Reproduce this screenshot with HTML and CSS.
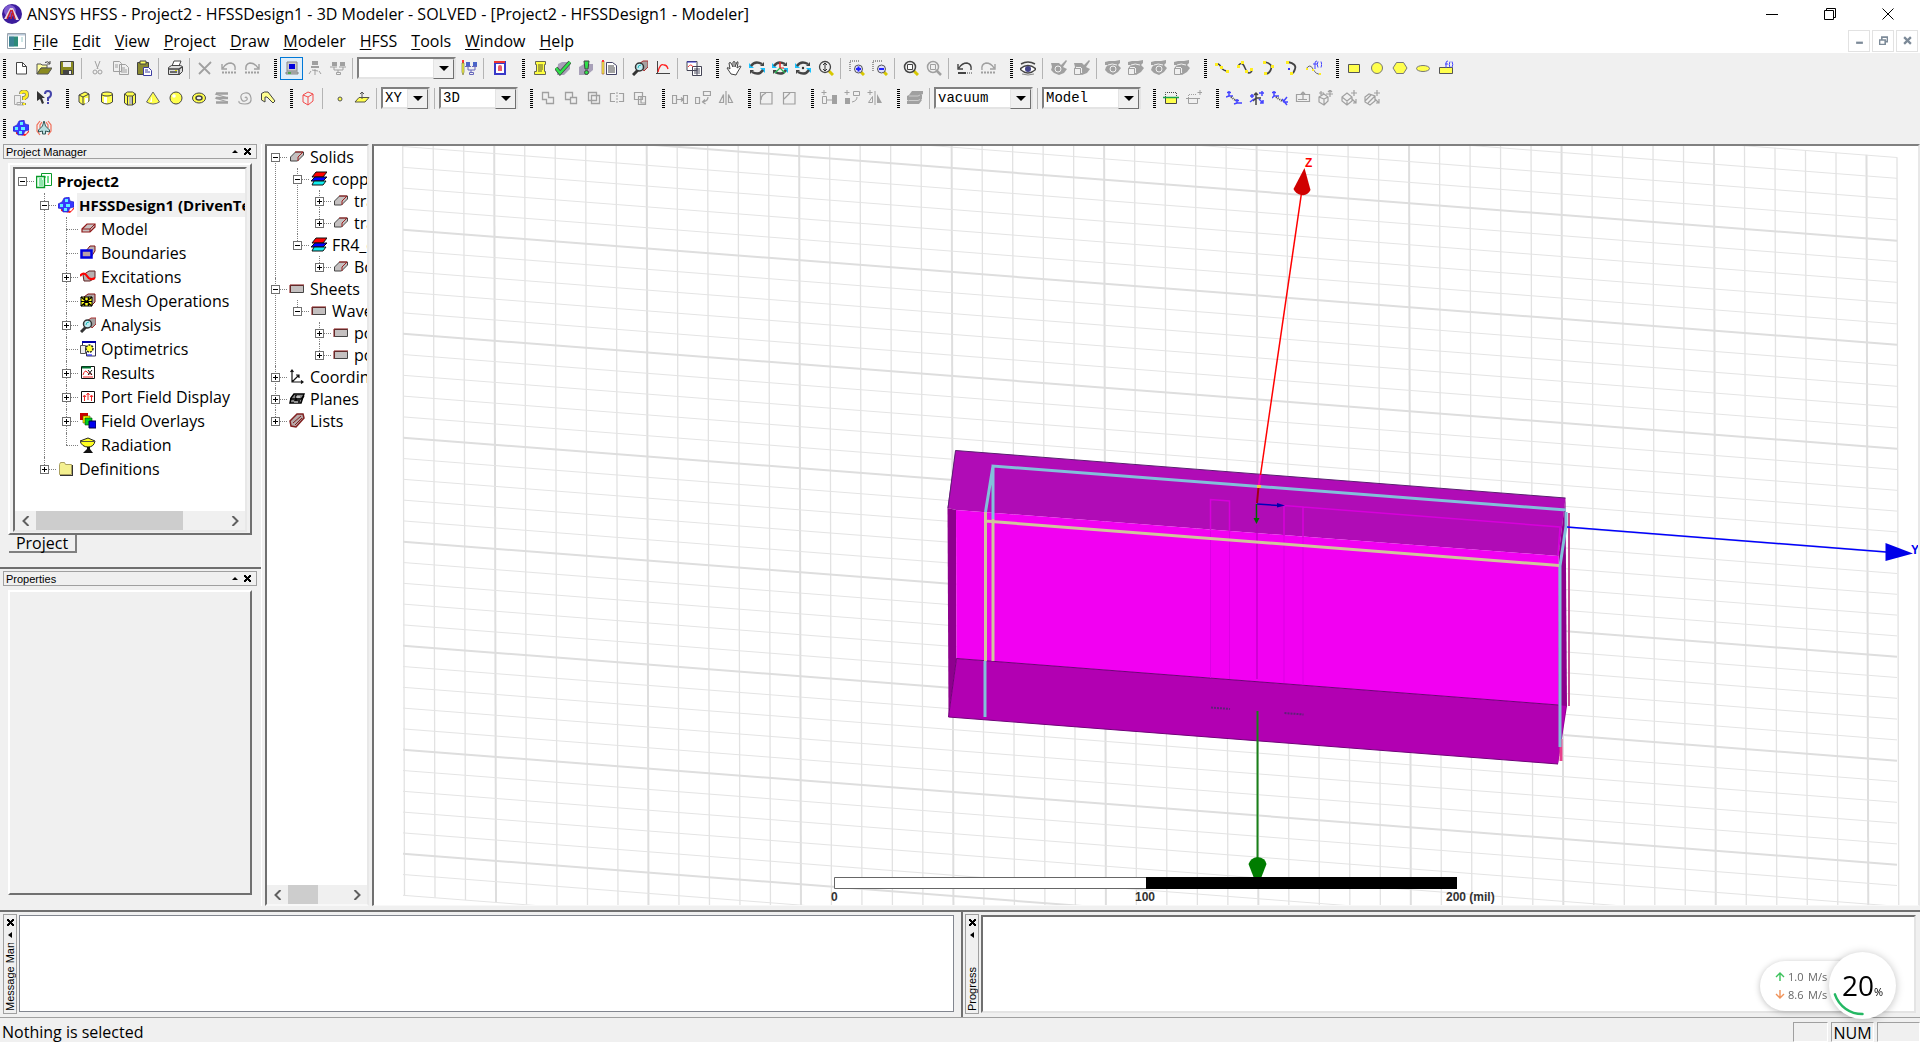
FILE: index.html
```html
<!DOCTYPE html>
<html lang="en">
<head>
<meta charset="utf-8">
<title>ANSYS HFSS - Project2 - HFSSDesign1 - 3D Modeler</title>
<link rel="stylesheet" href="styles.css">
</head>
<body>
<svg class="sprite" aria-hidden="true">
  <defs>
    <!-- file and edit -->
    <symbol id="i-new" viewBox="0 0 16 16"><path d="M3.500 2.500h6l4 4v7.500h-10z" fill="#fff" stroke="#444"/><path d="M9.500 2.500v4h4" fill="none" stroke="#444"/></symbol>
    <symbol id="i-open" viewBox="0 0 16 16"><path d="M1 4h4l1 1h5v3H5l-4 6z" fill="#ffffa0" stroke="#555"/><path d="M1 14l4-6h11l-4 6z" fill="#8a8a20" stroke="#555"/><path d="M9 2.500q3-2 5 1M14 1v3h-3" fill="none" stroke="#444"/></symbol>
    <symbol id="i-save" viewBox="0 0 16 16"><path d="M1.500 1.500h13v13h-13z" fill="#8a8a20" stroke="#444"/><path d="M4 2h8v5H4z" fill="#eee"/><path d="M4 10h9v4H4z" fill="#444"/><path d="M10 11h2v3h-2z" fill="#eee"/></symbol>
    <symbol id="i-cut" viewBox="0 0 16 16"><g fill="none" stroke="#a0a0a0"><path d="M5 1l3 8M10 1L7 9"/><circle cx="5" cy="12" r="2"/><circle cx="10" cy="12" r="2"/></g></symbol>
    <symbol id="i-copy" viewBox="0 0 16 16"><g fill="#f0f0f0" stroke="#a0a0a0"><path d="M.5 1.500h6l2 2v8h-8zM6.500 4.500h6l3 3v7h-9z"/><path d="M2 5h3M2 7h3M8 8h4M8 10h6M8 12h6"/></g></symbol>
    <symbol id="i-paste" viewBox="0 0 16 16"><path d="M1.500 2.500h11v12h-11z" fill="#8a8a30" stroke="#444"/><path d="M4 1h6v3H4z" fill="#ffff60" stroke="#444"/><path d="M7.500 7.500h5l3 3v5h-8z" fill="#fff" stroke="#3c3ca0"/><path d="M9 10h3M9 12h5" stroke="#3c3ca0"/></symbol>
    <symbol id="i-print" viewBox="0 0 16 16"><path d="M5 6l2-5h7l-2 5" fill="#fff" stroke="#444"/><path d="M1.500 7.500l3-2h9l2 1v5l-3 3h-11z" fill="#ddd" stroke="#444"/><path d="M1 9h11l3-2M12 9v6M3 12h7" fill="none" stroke="#444" stroke-width="1.500"/><path d="M8 10h2v1H8z" fill="#dd0"/></symbol>
    <symbol id="i-del" viewBox="0 0 16 16"><path d="M1 3l11 11M13 2L1 14" stroke="#a0a0a0" stroke-width="1.800"/></symbol>
    <symbol id="i-undo" viewBox="0 0 16 16"><path d="M2 8q3-5 8-5 5 1 4 7M1 4v5h5" fill="none" stroke="#a0a0a0" stroke-width="1.400"/><path d="M1 12.500h8M10 12.500h5" stroke="#a0a0a0" stroke-width="2" stroke-dasharray="2 1"/></symbol>
    <symbol id="i-redo" viewBox="0 0 16 16"><path d="M14 8q-3-5-8-5-5 1-4 7M15 4v5h-5" fill="none" stroke="#a0a0a0" stroke-width="1.400"/><path d="M15 12.500H7M6 12.500H1" stroke="#a0a0a0" stroke-width="2" stroke-dasharray="2 1"/></symbol>
    <symbol id="i-undod" viewBox="0 0 16 16"><path d="M2 8q3-5 8-5 5 1 4 7M1 4v5h5" fill="none" stroke="#444" stroke-width="1.400"/><path d="M1 13h8" stroke="#444" stroke-width="2"/><path d="M10 13h5" stroke="#444" stroke-dasharray="1 1"/></symbol>
    <!-- machines -->
    <symbol id="i-pc" viewBox="0 0 16 16"><path d="M3 2h10v9H3z" fill="#ccc" stroke="#888"/><path d="M5 4h6v5H5z" fill="#00d"/><path d="M2 12h12v2H2z" fill="#bbb" stroke="#888"/><path d="M4 13h3" stroke="#0a0"/></symbol>
    <symbol id="i-pc2" viewBox="0 0 16 16"><path d="M5 1h6v4H5zM4 6h8v2H4z" fill="#a0a0a0"/><path d="M8 9v2M4 11l-2 3M8 11v4M12 11l2 3M5 10l6 1" stroke="#a0a0a0"/></symbol>
    <symbol id="i-pc3" viewBox="0 0 16 16"><path d="M2 2h5v4H2zM10 2h5v4h-5z" fill="#a0a0a0"/><path d="M0 7h7M9 7h7M4 7v3h9V7M8 10v2" fill="none" stroke="#a0a0a0"/><path d="M6.500 12.500h4v2h-4z" fill="none" stroke="#a0a0a0"/></symbol>
    <symbol id="i-pc4" viewBox="0 0 16 16"><path d="M1 0h2v3H1z" fill="#f33"/><path d="M1 3h2v9l-1 3-1-3z" fill="#ff4" stroke="#663" stroke-width=".6"/><path d="M5 2h4v4H5zM12 2h4v4h-4z" fill="#4a64c8"/><path d="M7 7v3h7V7M10 10v2M4 6.500h6M11 6.500h5" fill="none" stroke="#66b"/><path d="M8.500 12.500h4v2h-4z" fill="none" stroke="#66b"/></symbol>
    <symbol id="i-log" viewBox="0 0 16 16"><path d="M2 1h12v14H2z" fill="#3838c8"/><path d="M2 1h11v2H2z" fill="#e33"/><path d="M4 4h8v9H4z" fill="#fff"/><path d="M6 7q0-2 2-2t2 2v4H6z" fill="#eb5a6a"/></symbol>
    <!-- validation and analysis -->
    <symbol id="i-scroll" viewBox="0 0 16 16"><path d="M3.500 1.500h10v3h-1v7h1v3h-11v-3h2v-7h-1z" fill="#ffff40" stroke="#665"/><path d="M6 5h5M6 7h5M6 9h5M6 11h4" stroke="#553"/></symbol>
    <symbol id="i-check" viewBox="0 0 16 16"><path d="M3 4l4-2h8v7l-6 6H2z" fill="#a8a0b8"/><path d="M1 8l4 5L15 2" fill="none" stroke="#444" stroke-width="4"/><path d="M1 8l4 5L15 2" fill="none" stroke="#2fe04a" stroke-width="2.500"/></symbol>
    <symbol id="i-bang" viewBox="0 0 16 16"><path d="M1 7l5-3h9v6l-6 5H1z" fill="#a8a0b8"/><path d="M6 1h5l-1 8H7z" fill="#2fe04a" stroke="#444"/><circle cx="8.500" cy="12.500" r="2" fill="#2fe04a" stroke="#444"/></symbol>
    <symbol id="i-doc" viewBox="0 0 16 16"><path d="M1 1h2v13H1z" fill="#ff4" stroke="#a64" stroke-width=".7"/><path d="M1 0h2v2H1z" fill="#f33"/><path d="M5.500 2.500h6l4 3v9h-10z" fill="#fff" stroke="#446"/><path d="M7 6h6M7 8h7M7 10h7M7 12h7" stroke="#444"/></symbol>
    <symbol id="i-mag" viewBox="0 0 16 16"><path d="M7 4l4-3h5v6l-4 4z" fill="#a6a0a0" stroke="#a33"/><path d="M6 10l-5 5" stroke="#333" stroke-width="3"/><circle cx="7.500" cy="7" r="4" fill="#bfeaf0" stroke="#333" stroke-width="1.500"/><path d="M6 8q0-3 3-3" fill="none" stroke="#2bb"/></symbol>
    <symbol id="i-chart" viewBox="0 0 16 16"><path d="M2.500 1v13M1 13.500h14" stroke="#444"/><path d="M3 12q2-9 6-7 3 0 4 4" fill="none" stroke="#f22" stroke-width="1.300"/></symbol>
    <symbol id="i-rep" viewBox="0 0 16 16"><path d="M1 1.500h10v9H1zM6.500 6.500h9v9h-9z" fill="#fff" stroke="#445"/><path d="M1 2h9" stroke="#33c" stroke-width="1"/><path d="M2 7q3-4 5 0" stroke="#e33" fill="none"/><path d="M8 9h6M8 11h6M8 13h6M11 8v7" stroke="#556"/></symbol>
    <!-- view control -->
    <symbol id="i-hand" viewBox="0 0 16 16"><path d="M5 14L1 8q0-1.500 3 1L3 3q1-1 2 0l2 4V2q1-1 2 0v5l2-5q1-1 1 1l-1 5 3-2q2 0 0 2l-3 5-1 2z" fill="#fff" stroke="#444"/></symbol>
    <symbol id="i-rot" viewBox="0 0 16 16"><path d="M0 3v5h5zM16 13V8h-5z" fill="#19c3ff"/><path d="M2 6q4-6 11-2M14 10q-4 6-11 2" fill="none" stroke="#444" stroke-width="2.400"/><path d="M11 6h4V2zM5 10H1v4z" fill="#444"/></symbol>
    <symbol id="i-rota" viewBox="0 0 16 16"><use href="#i-rot"/><path d="M8 2v7" stroke="#e22" stroke-width="1.500"/><path d="M8 8l5 5M8 8l-5 5" stroke="#2b5" stroke-width="1.200"/><path d="M8 8h4" stroke="#e22"/></symbol>
    <symbol id="i-rotb" viewBox="0 0 16 16"><use href="#i-rot"/><circle cx="8" cy="8" r="1.200" fill="#333"/></symbol>
    <symbol id="i-zoomv" viewBox="0 0 16 16"><path d="M10 10l5 5" stroke="#d8c800" stroke-width="3"/><circle cx="7" cy="7" r="5.500" fill="#eee" stroke="#444" stroke-width="1.300"/><path d="M7 3v8M5 5l2-2 2 2M5 9l2 2 2-2" fill="none" stroke="#333"/></symbol>
    <symbol id="i-zin" viewBox="0 0 16 16"><path d="M1 11V1h10" fill="none" stroke="#444" stroke-dasharray="1 1"/><path d="M12 12l3 3" stroke="#d8c800" stroke-width="3"/><circle cx="9.500" cy="9" r="4" fill="#ddf" stroke="#555"/><path d="M9.500 6.500v5M7 9h5" stroke="#22f" stroke-width="2"/></symbol>
    <symbol id="i-zout" viewBox="0 0 16 16"><path d="M1 11V1h10" fill="none" stroke="#444" stroke-dasharray="1 1"/><path d="M12 12l3 3" stroke="#d8c800" stroke-width="3"/><circle cx="9.500" cy="9" r="4" fill="#ddf" stroke="#555"/><path d="M7 9h5" stroke="#22f" stroke-width="2"/></symbol>
    <symbol id="i-fit" viewBox="0 0 16 16"><path d="M10 10l5 5" stroke="#d8c800" stroke-width="3"/><circle cx="7" cy="7" r="5.500" fill="#eee" stroke="#444" stroke-width="1.500"/><path d="M4.500 4.500h5v5h-5z" fill="#fff" stroke="#444"/></symbol>
    <symbol id="i-fitg" viewBox="0 0 16 16"><path d="M10 10l5 5" stroke="#a0a0a0" stroke-width="2.500"/><circle cx="7" cy="7" r="5.500" fill="none" stroke="#a0a0a0" stroke-width="1.500"/><path d="M4.500 4.500h5v5h-5z" fill="none" stroke="#a0a0a0"/></symbol>
    <symbol id="i-eye" viewBox="0 0 16 16"><path d="M1 4q7-4 14 0" fill="none" stroke="#444" stroke-width="1.500"/><path d="M0 9q8-7 16 0-8 8-16 0z" fill="#fff" stroke="#444" stroke-width="1.600"/><circle cx="8" cy="9" r="3" fill="#448"/><path d="M2 14q6 2 12 0" stroke="#888" fill="none"/></symbol>
    <symbol id="i-eyeg" viewBox="0 0 16 16"><path d="M0 2l4-1h6l5-1v3l-2 2 3 3-3 4-5 3-5-2-3-3 1-3 2-2H0z" fill="#a0a0a0"/><circle cx="8" cy="9" r="3" fill="none" stroke="#f0f0f0"/><path d="M3 5q4-2 9 0" fill="none" stroke="#f0f0f0"/></symbol>
    <symbol id="i-eyeh" viewBox="0 0 16 16"><path d="M0 2l4-1h6l5-1v3l-2 2 3 3-3 4-5 3-5-2-3-3 1-3 2-2H0z" fill="#a0a0a0"/><path d="M3 5q4-2 9 0" fill="none" stroke="#f0f0f0"/><path d="M.5 8.500l2-2h6v6l-2 2h-6zM.5 8.500h6v6M6.500 8.500l2-2" fill="#f0f0f0" stroke="#a0a0a0"/></symbol>
    <symbol id="i-eyet" viewBox="0 0 16 16"><path d="M0 3h8l2 2 5-5 1 1-4 6 4 2-3 4-5 2-5-2-3-3 1-3z" fill="#a0a0a0"/><circle cx="7" cy="9" r="3" fill="none" stroke="#f0f0f0"/></symbol>
    <symbol id="i-eyeu" viewBox="0 0 16 16"><path d="M0 3h8l2 2 5-5 1 1-4 6 4 2-3 4-5 2-5-2-3-3 1-3z" fill="#a0a0a0"/><path d="M.5 8.500l2-2h6v6l-2 2h-6zM.5 8.500h6v6M6.500 8.500l2-2" fill="#f0f0f0" stroke="#a0a0a0"/></symbol>
    <!-- curves and sheets -->
    <symbol id="i-line" viewBox="0 0 16 16"><path d="M2 4q3-1 5 3t7 4" fill="none" stroke="#444" stroke-width="1.500"/><path d="M1 3h3v3H1zM6 6h3v3H6zM12 10h3v3h-3z" fill="#ffee20"/></symbol>
    <symbol id="i-spline" viewBox="0 0 16 16"><path d="M1 6q4-6 7 2t7 3" fill="none" stroke="#444" stroke-width="1.500"/><path d="M0 5h3v3H0zM4 1h3v3H4zM8 10h3v3H8zM13 8h3v3h-3z" fill="#ffee20"/></symbol>
    <symbol id="i-arc" viewBox="0 0 16 16"><path d="M5 2q8 2 6 7-1 4-5 5" fill="none" stroke="#444" stroke-width="1.800"/><path d="M3 1h3v3H3zM11 5h3v3h-3zM4 12h3v3H4z" fill="#ffee20"/></symbol>
    <symbol id="i-arc2" viewBox="0 0 16 16"><path d="M5 2q9 2 7 7-1 4-4 5" fill="none" stroke="#444" stroke-width="1.800"/><path d="M3 1h3v3H3zM7 12h3v3H7z" fill="#ffee20"/><path d="M5 8h2v2H5z" fill="#33f"/></symbol>
    <symbol id="i-fx" viewBox="0 0 16 16"><path d="M0 9q4-6 7 0t8 5" fill="none" stroke="#666"/><path d="M0 8h2v2H0zM6 9h2v2H6zM13 13h2v2h-2z" fill="#ffee20"/><path d="M9 9V3q0-2 2-2M7 4h4M12 1.500q-1.500 3 0 6M15 1.500q1.500 3 0 6" fill="none" stroke="#44f"/></symbol>
    <symbol id="i-rect" viewBox="0 0 16 16"><path d="M2.500 4.500h11v8h-11z" fill="#ffff4d" stroke="#555"/></symbol>
    <symbol id="i-circle" viewBox="0 0 16 16"><circle cx="8" cy="8" r="5.500" fill="#ffff4d" stroke="#777"/></symbol>
    <symbol id="i-hex" viewBox="0 0 16 16"><path d="M4.500 2.500h7l3.500 5.500-3.500 5.500h-7L1 8z" fill="#ffff4d" stroke="#777"/></symbol>
    <symbol id="i-ellipse" viewBox="0 0 16 16"><ellipse cx="8" cy="8.500" rx="6.500" ry="3" fill="#ffff4d" stroke="#777"/></symbol>
    <symbol id="i-rectfx" viewBox="0 0 16 16"><path d="M1.500 7.500h13v6h-13z" fill="#ffff4d" stroke="#555"/><path d="M8 8V3q0-2 2-2M7 4h3M12 1.500q-1.500 3 0 6M14 1.500q1.500 3 0 6" fill="none" stroke="#44f"/></symbol>
    <!-- help and primitives -->
    <symbol id="i-helpdoc" viewBox="0 0 16 16"><path d="M1.500 5.500h6v9h-6zM4 12.500h7v2.500H4z" fill="#eee" stroke="#aaa"/><path d="M8 4q0-2.500 3-2.500t3 3-3 3.500v2M11 13v2" fill="none" stroke="#776" stroke-width="4"/><path d="M8 4q0-2.500 3-2.500t3 3-3 3.500v2M11 13v2" fill="none" stroke="#ffee20" stroke-width="2.500"/></symbol>
    <symbol id="i-helparr" viewBox="0 0 16 16"><path d="M1 1l8 7H6l2 5-2 1-2-5-3 2z" fill="#333"/><path d="M9 4q0-3 3-3t3 3-3 4v3M12 12v2" fill="none" stroke="#44a" stroke-width="2"/></symbol>
    <symbol id="i-box" viewBox="0 0 16 16"><path d="M3 5l6-3 4 2v7l-6 4-4-3z" fill="#ffff4d" stroke="#444"/><path d="M3 5l4 2 6-3M7 7v8" fill="none" stroke="#444"/><path d="M9 8h3v4L9 14z" fill="#fff"/></symbol>
    <symbol id="i-cyl" viewBox="0 0 16 16"><path d="M2.500 4v8q5.500 4 11 0V4" fill="#ffff4d" stroke="#444"/><ellipse cx="8" cy="4" rx="5.500" ry="2" fill="#ffff4d" stroke="#444"/><path d="M5 7h3v6H5z" fill="#fff"/></symbol>
    <symbol id="i-prism" viewBox="0 0 16 16"><path d="M2.500 4l3-2h5l3 2v9l-3 2h-5l-3-2z" fill="#ffff4d" stroke="#444"/><path d="M2.500 4l3 2h5l3-2M5.500 6v9M10.500 6v9" fill="none" stroke="#444"/><path d="M7 7h3v7H7z" fill="#bbb"/></symbol>
    <symbol id="i-cone" viewBox="0 0 16 16"><path d="M8 2L1.500 12q6.500 4 13 0z" fill="#ffff4d" stroke="#666"/><path d="M7 6l-2 6h2z" fill="#fff"/></symbol>
    <symbol id="i-sphere" viewBox="0 0 16 16"><circle cx="8" cy="8" r="6" fill="#ffff4d" stroke="#444"/><circle cx="6" cy="6" r="1.800" fill="#fff"/></symbol>
    <symbol id="i-torus" viewBox="0 0 16 16"><ellipse cx="8" cy="8" rx="6.500" ry="5" fill="#ffff4d" stroke="#444"/><ellipse cx="8" cy="8" rx="3" ry="2" fill="#f0f0f0" stroke="#444" stroke-width="1.500"/></symbol>
    <symbol id="i-helix" viewBox="0 0 16 16"><path d="M2 3.500h12M2 8h12M2 12.500h12" stroke="#a0a0a0" stroke-width="2.500"/><path d="M1 4l13 4M1 8l13 4" stroke="#a0a0a0" stroke-width="1.200"/></symbol>
    <symbol id="i-spiral" viewBox="0 0 16 16"><path d="M8 8q1-2 2 0t-2 3-4-3 4-5 6 5-6 6-6-3" fill="none" stroke="#a0a0a0" stroke-width="1.200"/></symbol>
    <symbol id="i-bond" viewBox="0 0 16 16"><path d="M1.500 10V3.500l3-1.500H8l7 9-2 2-6-6H5v5z" fill="#ffff90" stroke="#444"/></symbol>
    <symbol id="i-redbox" viewBox="0 0 16 16"><path d="M3 5l5-3 5 2v7l-5 4-5-3zM3 5l5 2 5-3M8 7v8" fill="none" stroke="#f34a4a"/></symbol>
    <symbol id="i-point" viewBox="0 0 16 16"><circle cx="9" cy="9" r="2" fill="#ffff4d" stroke="#555"/></symbol>
    <symbol id="i-plane" viewBox="0 0 16 16"><path d="M5 7.500h10l-4 4.500H1z" fill="#ffff4d" stroke="#554"/><path d="M8 9V2M6 4l2-2 2 2" fill="none" stroke="#555"/></symbol>
    <!-- modeller operations -->
    <symbol id="i-unite" viewBox="0 0 16 16"><path d="M2.500 2.500h6v5h5v6h-7v-4h-4z" fill="none" stroke="#a0a0a0" stroke-width="1.300"/></symbol>
    <symbol id="i-sub" viewBox="0 0 16 16"><path d="M8 9.500H2.500v-7h7V7M7.500 7.500h6v6h-6z" fill="none" stroke="#a0a0a0" stroke-width="1.300"/></symbol>
    <symbol id="i-inter" viewBox="0 0 16 16"><path d="M2.500 2.500h8v8h-8zM5.500 5.500h8v8h-8z" fill="none" stroke="#a0a0a0" stroke-width="1.300"/></symbol>
    <symbol id="i-split" viewBox="0 0 16 16"><path d="M6 3.500H1.500v8H6M10 3.500h4.500v8H10" fill="none" stroke="#a0a0a0" stroke-width="1.200"/><path d="M8 2v12" stroke="#a0a0a0" stroke-dasharray="2 1"/></symbol>
    <symbol id="i-impr" viewBox="0 0 16 16"><path d="M2.500 2.500h8v7h-8zM6.500 6.500h7v8h-7zM9 7v6h4" fill="none" stroke="#a0a0a0" stroke-width="1.200"/></symbol>
    <symbol id="i-move" viewBox="0 0 16 16"><path d="M.5 5.500h4v8h-4zM11.500 5.500h4v8h-4zM5 9.500h6M9 7.500l2 2-2 2" fill="none" stroke="#a0a0a0" stroke-width="1.200"/></symbol>
    <symbol id="i-turn" viewBox="0 0 16 16"><path d="M.5 7.500h4v6h-4zM8.500 1.500h7v4h-7zM13 7q0 4-5 5M10 9.500L7.500 12l3 2" fill="none" stroke="#a0a0a0" stroke-width="1.200"/></symbol>
    <symbol id="i-mirror" viewBox="0 0 16 16"><path d="M1.500 12.500l4-8v8zM14.500 12.500l-4-8v8zM8 1v14" fill="none" stroke="#a0a0a0" stroke-width="1.200"/></symbol>
    <symbol id="i-dmove" viewBox="0 0 16 16"><path d="M1.500 6.500h4v7h-4zM6 10h5M3 0v5M.5 2.500h5" fill="none" stroke="#a0a0a0"/><path d="M11 5h5v9h-5z" fill="#a0a0a0"/></symbol>
    <symbol id="i-dturn" viewBox="0 0 16 16"><path d="M1 8h5v6H1z" fill="#a0a0a0"/><path d="M9.500 1.500h6v4h-6zM13 7q0 4-5 5M3 0v5M.5 2.500h5" fill="none" stroke="#a0a0a0"/></symbol>
    <symbol id="i-dmirror" viewBox="0 0 16 16"><path d="M10 13V4l5 9z" fill="#a0a0a0"/><path d="M1.500 12.500l4-6v6zM8 1v14M3 0v5M.5 2.500h5" fill="none" stroke="#a0a0a0"/></symbol>
    <symbol id="i-fillet" viewBox="0 0 16 16"><path d="M2.500 14V2.500H14V14zM3 10q0-5 5-7" fill="none" stroke="#a0a0a0" stroke-width="1.200"/></symbol>
    <symbol id="i-chamf" viewBox="0 0 16 16"><path d="M2.500 14V2.500H14V14zM3 9l6-6" fill="none" stroke="#a0a0a0" stroke-width="1.200"/></symbol>
    <symbol id="i-layers" viewBox="0 0 16 16"><path d="M5 1h11v3l-2 1h1v4l-1 1h1l-3 4H0v-3l2-1H0V6l2-1z" fill="#a0a0a0"/><path d="M2 6h9l2-1M2 10.500h9l2-1" fill="none" stroke="#e0e0e0" stroke-width=".7"/></symbol>
    <symbol id="i-sheetg" viewBox="0 0 16 16"><path d="M2.500 7.500h11v6h-11z" fill="#ffff4d" stroke="#444"/><path d="M2.500 7V2.500h11V7" fill="none" stroke="#444" stroke-dasharray="1 1"/><path d="M0 7.500h16" stroke="#1aa34a" stroke-width="1.500"/></symbol>
    <symbol id="i-sheeta" viewBox="0 0 16 16"><path d="M2.500 8.500h9v5h-9zM14 0v5M11.500 2.500h5M0 8.500h14" fill="none" stroke="#a0a0a0"/><path d="M2.500 8V4.500h8" fill="none" stroke="#a0a0a0" stroke-dasharray="1 1"/></symbol>
    <symbol id="i-cs1" viewBox="0 0 16 16"><path d="M3 1v5h4M3 6L0 7M1 2.500h4M11 9v4h5M11 13l-3 1M9 10.500h4" fill="none" stroke="#44f" stroke-width="1.500"/><path d="M5 7l4 3" stroke="#444" stroke-dasharray="1 1" stroke-width="2"/></symbol>
    <symbol id="i-cs2" viewBox="0 0 16 16"><path d="M7 15V4M7 8h5M7 8l-3 3M5 5l2-2 2 2" fill="none" stroke="#444" stroke-width="1.500"/><path d="M1 6h4M3 4v4M1 12l4-3M10 3h5M13 1v5M10 9l4 4M14 10v3h-3" fill="none" stroke="#44f" stroke-width="1.500"/></symbol>
    <symbol id="i-cs3" viewBox="0 0 16 16"><path d="M2 1v5h5M2 6L0 8M0 2.500h4M11 12l4-5M11 12h5M10 9l5 6" fill="none" stroke="#44f" stroke-width="1.500"/><path d="M4 7l6 4" stroke="#444" stroke-dasharray="1 1" stroke-width="2"/></symbol>
    <symbol id="i-cs4" viewBox="0 0 16 16"><path d="M1.500 4.500h13v7h-13zM3 9.500h9M8 2v8M6 4l2-2 2 2" fill="none" stroke="#a0a0a0" stroke-width="1.200"/></symbol>
    <symbol id="i-cs5" viewBox="0 0 16 16"><path d="M1 7l5-3 4 3v4l-4 4-5-3zM1 7l5 2 4-2M6 9v6M8 4h7M12 0v7M10 2l2-2 2 2M1 3h5M3 1v4" fill="none" stroke="#a0a0a0" stroke-width="1.200"/></symbol>
    <symbol id="i-cs6" viewBox="0 0 16 16"><path d="M1 7l5-4 5 4v4l-5 4-5-4zM1 7l5 4 5-4M6 11v4M10 3h6M13 0v6M11 9l4 4M15 9v4h-3" fill="none" stroke="#a0a0a0" stroke-width="1.200"/></symbol>
    <symbol id="i-cs7" viewBox="0 0 16 16"><path d="M1 7l4-3 6 2v5l-5 4-5-3zM1 11l6-6M4 13l7-7M10 3h6M13 0v6M11 9l4 4M15 9v4h-3" fill="none" stroke="#a0a0a0" stroke-width="1.200"/></symbol>
    <symbol id="i-hfss" viewBox="0 0 16 16"><path d="M3 12l10 2 3-4v2l-4 4-9-2z" fill="#f22"/><path d="M6 1l5-1 1 4 4 1v5l-4 1-2 4H5l-1-3-4-1V7l4-2z" fill="#3838ff" stroke="#1c1cc0" stroke-width=".6"/><path d="M7 2h3v3H7zM2 7h3v3H2zM8 7h4v3H8zM6 11h3v3H6z" fill="#5ff0ff"/></symbol>
    <symbol id="i-plane2" viewBox="0 0 16 16"><path d="M4 1L1 5v6l3 4M12 1l3 4v6l-3 4M6 2L4 5v3M10 2l2 3v3" fill="none" stroke="#f0705a" stroke-width="1.200"/><path d="M8 1l1.500 5 4 4v2l-4-1v3H6.500v-3l-4 1v-2l4-4z" fill="#b8e0e0" stroke="#355"/></symbol>
    <!-- tree items -->
    <symbol id="t-proj" viewBox="0 0 16 16"><path d="M5.500.5h10v12h-10z" fill="#fff" stroke="#0a9a2a"/><path d="M8 3h2v2H8zM11 3h2v7h-2z" fill="#6fe08a"/><path d="M.5 3.500h8v11h-8z" fill="#eafff0" stroke="#0a9a2a" stroke-width="1.400"/><path d="M3 6h3M3 8h4M3 10h4M3 12h4" stroke="#3c6"/></symbol>
    <symbol id="t-model" viewBox="0 0 16 16"><path d="M2 8l5-5h8v3l-5 5H2z" fill="#c8c0c0" stroke="#901818" stroke-width="1.200"/><path d="M2 8h8l5-5M10 8v3" fill="none" stroke="#901818"/></symbol>
    <symbol id="t-bound" viewBox="0 0 16 16"><path d="M6 6l4-5h5v5l-4 6z" fill="#b8b0b0" stroke="#801010"/><path d="M1.500 5.500h10v7h-10z" fill="#b8a0a8" stroke="#0000e0" stroke-width="2.500"/></symbol>
    <symbol id="t-exc" viewBox="0 0 16 16"><path d="M3 6l6-4h6v7l-5 3H4z" fill="#b8b0b0" stroke="#602020"/><path d="M0 7q4-5 7 0t8 2" fill="none" stroke="#f00" stroke-width="2.200"/></symbol>
    <symbol id="t-mesh" viewBox="0 0 16 16"><path d="M4 4l4-3h7v8l-3 3z" fill="#b0a8a8" stroke="#801010"/><path d="M1 4h11v9H1z" fill="#ffff20" stroke="#000"/><path d="M1 8.500h11M4.700 4v9M8.300 4v9M1 4l11 9M12 4L1 13" stroke="#000" stroke-width="1.200"/></symbol>
    <symbol id="t-opt" viewBox="0 0 16 16"><path d="M2.500 1h13v14h-9v-4h-4z" fill="#fff" stroke="#335"/><path d="M2 1h14" stroke="#00a" stroke-width="2"/><path d="M.5 4.500h5v8h-5z" fill="#eee" stroke="#555"/><circle cx="9.500" cy="7.500" r="3.500" fill="#ffff30" stroke="#222" stroke-width="1.500" stroke-dasharray="2 1"/><path d="M7 14h5" stroke="#00f"/></symbol>
    <symbol id="t-res" viewBox="0 0 16 16"><path d="M1.500 1.500h13v12h-13z" fill="#fff" stroke="#111"/><path d="M2 2.500h9" stroke="#073" stroke-width="2"/><path d="M3 10q2-6 4-3t5 2M3 12h10" fill="none" stroke="#e22"/><path d="M8 5l4 5M12 5L8 10" stroke="#111"/></symbol>
    <symbol id="t-port" viewBox="0 0 16 16"><path d="M1.500 2.500h13v11h-13z" fill="#fff" stroke="#111"/><path d="M4.500 12V7M8 11V5M11.500 12V7M3 8l1.500-2L6 8M6.500 6L8 4l1.500 2M10 8l1.500-2L13 8" fill="none" stroke="#e22"/></symbol>
    <symbol id="t-field" viewBox="0 0 16 16"><path d="M0 0h8v7H0z" fill="#c00"/><path d="M3 3h7v7H3z" fill="#ff0" stroke="#550" stroke-width=".6"/><path d="M5 5h7v7H5z" fill="#0c2" stroke="#040" stroke-width=".6"/><path d="M9 8h7v7H9z" fill="#00e" stroke="#004"/></symbol>
    <symbol id="t-rad" viewBox="0 0 16 16"><path d="M0 4l8-3 7 3q-1 6-7 6T0 4z" fill="#ffff20" stroke="#222"/><path d="M1 4.500h14" stroke="#554"/><path d="M7 10h3v2l3 4H3l4-4z" fill="#111"/></symbol>
    <symbol id="t-folder" viewBox="0 0 16 16"><path d="M1.500 3.500l1-2h4l1 2h6v10h-12z" fill="#f4f090" stroke="#aaa060"/><path d="M2 14.500h13M14.500 4v11" stroke="#333"/></symbol>
    <symbol id="t-solid" viewBox="0 0 16 16"><path d="M1.500 12V8l5-5h8v3l-6 6z" fill="#c4c0c0" stroke="#444"/><path d="M14 3L9 8v4" fill="none" stroke="#a02020"/><path d="M6 3h8" stroke="#a02020"/></symbol>
    <symbol id="t-mat" viewBox="0 0 16 16"><path d="M5 1h11l-4 5H1z" fill="#f00" stroke="#111"/><path d="M4 6h12l-4 4H0z" fill="#00f" stroke="#111"/><path d="M3 10h12l-3 4H1z" fill="#1ee" stroke="#111"/></symbol>
    <symbol id="t-sheet" viewBox="0 0 16 16"><path d="M1.500 4.500h13v7h-13z" fill="#c4c0c0" stroke="#444"/><path d="M1 12V4h14" fill="none" stroke="#801010"/></symbol>
    <symbol id="t-cs" viewBox="0 0 16 16"><path d="M3 1v12h11M3 13L10 6M1.500 3L3 1l1.500 2M12 11.500l2 1.500-2 1.500M7 6h3v3" fill="none" stroke="#111" stroke-width="1.200"/></symbol>
    <symbol id="t-planes" viewBox="0 0 16 16"><path d="M5 3h10l-3 9H1l1-5z" fill="#888" stroke="#000" stroke-width="1.500"/><path d="M1 8h11l3-3M5 10h6M7 4v6" fill="none" stroke="#000" stroke-width="1.500"/><path d="M7 6h4M5 11h4" stroke="#fff"/></symbol>
    <symbol id="t-lists" viewBox="0 0 16 16"><path d="M1 8l7-7h6l1 4-8 9-5-1z" fill="#b8a8a8" stroke="#802020" stroke-width="1.500"/><path d="M4 10l8-7M6 12l7-7" stroke="#802020"/></symbol>
    <symbol id="t-mag" viewBox="0 0 16 16"><use href="#i-mag"/></symbol>
    <!-- grid cells: five fine lines with one heavy line -->
    <g id="gv"><path d="M402.500 42l2 853M433 44.500l2 853M463.500 47l2 853M524.500 51.500l2 853" stroke="#e2e2e2" stroke-width="1.300"/><path d="M494 49l2 853" stroke="#dedede" stroke-width="2"/></g>
    <g id="gh"><path d="M403 42.500l1494 115M403 63.300l1494 115M403 84.100l1494 115M403 104.900l1494 115" stroke="#e4e4e4" stroke-width="1"/><path d="M403 125.700l1494 115" stroke="#dedede" stroke-width="2"/></g>
  </defs>
</svg>

<div class="app">
  <header class="titlebar">
    <svg class="logo" viewBox="0 0 20 20"><circle cx="10" cy="10" r="10" fill="#3b1c9c"/><circle cx="8" cy="7" r="6" fill="#7d5ad0"/><path d="M2 15l6-11 3 0 6 12h-3l-4-9-1 0-4 8z" fill="#e9d9e0"/><path d="M5 15l4-9M9 15l1-6M13 15l-3-9" stroke="#c8202c" stroke-width="1.500"/></svg>
    <h1 class="title">ANSYS HFSS - Project2 - HFSSDesign1 - 3D Modeler - SOLVED - [Project2 - HFSSDesign1 - Modeler]</h1>
    <div class="winbtns">
      <button aria-label="Minimize"><svg viewBox="0 0 12 12"><path d="M0 6.500h12" stroke="#000"/></svg></button>
      <button aria-label="Restore"><svg viewBox="0 0 12 12"><path d="M.5 2.500h9v9h-9zM2.500 2V.5h9v9H10" fill="none" stroke="#000"/></svg></button>
      <button aria-label="Close"><svg viewBox="0 0 12 12"><path d="M.5.5l11 11M11.500.5l-11 11" stroke="#000"/></svg></button>
    </div>
  </header>
  <nav class="menubar">
    <svg class="docicon" viewBox="0 0 19 16"><path d="M.5.5h18v15H.5z" fill="#fff" stroke="#9aa4ae"/><path d="M1 1h17v1.500H1z" fill="#b8c8d8"/><path d="M2 3.500h9v10H2z" fill="#2d8a78"/><path d="M2 3.500h5v10H2z" fill="#4a7ab0" opacity=".5"/><path d="M15 4v5" stroke="#9cc"/></svg>
    <button><u>F</u>ile</button><button><u>E</u>dit</button><button><u>V</u>iew</button><button><u>P</u>roject</button><button><u>D</u>raw</button><button><u>M</u>odeler</button><button><u>H</u>FSS</button><button><u>T</u>ools</button><button><u>W</u>indow</button><button><u>H</u>elp</button>
    <div class="mdibtns">
      <button aria-label="Minimize document"><svg viewBox="0 0 8 8"><path d="M1 6h6" stroke="#7c8a98" stroke-width="2"/></svg></button>
      <button aria-label="Restore document"><svg viewBox="0 0 8 8"><path d="M.5 3.500h5v4h-5zM2.500 3V1h5v4H6" fill="none" stroke="#7c8a98" stroke-width="1.400"/></svg></button>
      <button aria-label="Close document"><svg viewBox="0 0 8 8"><path d="M1 1l6 6M7 1L1 7" stroke="#7c8a98" stroke-width="2"/></svg></button>
    </div>
  </nav>

  <div class="toolbars">
    <div class="tbrow">
      <div class="tb"><button><svg><use href="#i-new"/></svg></button><button><svg><use href="#i-open"/></svg></button><button><svg><use href="#i-save"/></svg></button><i></i><button><svg><use href="#i-cut"/></svg></button><button><svg><use href="#i-copy"/></svg></button><button><svg><use href="#i-paste"/></svg></button><i></i><button><svg><use href="#i-print"/></svg></button><i></i><button><svg><use href="#i-del"/></svg></button><button><svg><use href="#i-undo"/></svg></button><button><svg><use href="#i-redo"/></svg></button></div>
      <div class="tb"><button class="on"><svg><use href="#i-pc"/></svg></button><button><svg><use href="#i-pc2"/></svg></button><button><svg><use href="#i-pc3"/></svg></button><i></i><span class="combo wide"><select aria-label="Machine"><option></option></select></span><button><svg><use href="#i-pc4"/></svg></button><i></i><button><svg><use href="#i-log"/></svg></button></div>
      <div class="tb"><button><svg><use href="#i-scroll"/></svg></button><button><svg><use href="#i-check"/></svg></button><button><svg><use href="#i-bang"/></svg></button><button><svg><use href="#i-doc"/></svg></button><i></i><button><svg><use href="#i-mag"/></svg></button><button><svg><use href="#i-chart"/></svg></button><i></i><button><svg><use href="#i-rep"/></svg></button></div>
      <div class="tb"><button><svg><use href="#i-hand"/></svg></button><button><svg><use href="#i-rot"/></svg></button><button><svg><use href="#i-rota"/></svg></button><button><svg><use href="#i-rotb"/></svg></button><button><svg><use href="#i-zoomv"/></svg></button><i></i><button><svg><use href="#i-zin"/></svg></button><button><svg><use href="#i-zout"/></svg></button><i></i><button><svg><use href="#i-fit"/></svg></button><button><svg><use href="#i-fitg"/></svg></button><i></i><button><svg><use href="#i-undod"/></svg></button><button><svg><use href="#i-redo"/></svg></button></div>
      <div class="tb"><button><svg><use href="#i-eye"/></svg></button><i></i><button><svg><use href="#i-eyet"/></svg></button><button><svg><use href="#i-eyeu"/></svg></button><i></i><button><svg><use href="#i-eyeg"/></svg></button><button><svg><use href="#i-eyeh"/></svg></button><button><svg><use href="#i-eyeg"/></svg></button><button><svg><use href="#i-eyeh"/></svg></button></div>
      <div class="tb"><button><svg><use href="#i-line"/></svg></button><button><svg><use href="#i-spline"/></svg></button><button><svg><use href="#i-arc"/></svg></button><button><svg><use href="#i-arc2"/></svg></button><button><svg><use href="#i-fx"/></svg></button></div>
      <div class="tb"><button><svg><use href="#i-rect"/></svg></button><button><svg><use href="#i-circle"/></svg></button><button><svg><use href="#i-hex"/></svg></button><button><svg><use href="#i-ellipse"/></svg></button><button><svg><use href="#i-rectfx"/></svg></button></div>
    </div>
    <div class="tbrow">
      <div class="tb"><button><svg><use href="#i-helpdoc"/></svg></button><button><svg><use href="#i-helparr"/></svg></button></div>
      <div class="tb"><button><svg><use href="#i-box"/></svg></button><button><svg><use href="#i-cyl"/></svg></button><button><svg><use href="#i-prism"/></svg></button><button><svg><use href="#i-cone"/></svg></button><button><svg><use href="#i-sphere"/></svg></button><button><svg><use href="#i-torus"/></svg></button><button><svg><use href="#i-helix"/></svg></button><button><svg><use href="#i-spiral"/></svg></button><button><svg><use href="#i-bond"/></svg></button></div>
      <div class="tb"><button><svg><use href="#i-redbox"/></svg></button><i></i><button><svg><use href="#i-point"/></svg></button><button><svg><use href="#i-plane"/></svg></button><i></i><span class="combo narrow"><select aria-label="Drawing plane"><option>XY</option></select></span><i></i><span class="combo mid"><select aria-label="Movement mode"><option>3D</option></select></span></div>
      <div class="tb"><button><svg><use href="#i-unite"/></svg></button><button><svg><use href="#i-sub"/></svg></button><button><svg><use href="#i-inter"/></svg></button><button><svg><use href="#i-split"/></svg></button><button><svg><use href="#i-impr"/></svg></button></div>
      <div class="tb"><button><svg><use href="#i-move"/></svg></button><button><svg><use href="#i-turn"/></svg></button><button><svg><use href="#i-mirror"/></svg></button></div>
      <div class="tb"><button><svg><use href="#i-fillet"/></svg></button><button><svg><use href="#i-chamf"/></svg></button></div>
      <div class="tb"><button><svg><use href="#i-dmove"/></svg></button><button><svg><use href="#i-dturn"/></svg></button><button><svg><use href="#i-dmirror"/></svg></button></div>
      <div class="tb"><button><svg><use href="#i-layers"/></svg></button><i></i><span class="combo wide"><select aria-label="Material"><option>vacuum</option></select></span><i></i><span class="combo wide"><select aria-label="Object type"><option>Model</option></select></span></div>
      <div class="tb"><button><svg><use href="#i-sheetg"/></svg></button><button><svg><use href="#i-sheeta"/></svg></button></div>
      <div class="tb"><button><svg><use href="#i-cs1"/></svg></button><button><svg><use href="#i-cs2"/></svg></button><button><svg><use href="#i-cs3"/></svg></button><button><svg><use href="#i-cs4"/></svg></button><button><svg><use href="#i-cs5"/></svg></button><button><svg><use href="#i-cs6"/></svg></button><button><svg><use href="#i-cs7"/></svg></button></div>
    </div>
    <div class="tbrow">
      <div class="tb"><button><svg><use href="#i-hfss"/></svg></button><button><svg><use href="#i-plane2"/></svg></button></div>
    </div>
  </div>

  <main class="work">
    <aside class="dock">
      <section class="pane project">
        <div class="caption"><h2>Project Manager</h2><button class="up" aria-label="Expand"></button><button class="x" aria-label="Close"></button></div>
        <div class="raised">
          <div class="sunken">
            <ul class="tree big">
              <li class="root"><div class="row"><button class="ex minus" aria-label="Collapse"></button><svg><use href="#t-proj"/></svg><b>Project2</b></div>
                <ul>
                  <li><div class="row"><button class="ex minus" aria-label="Collapse"></button><svg><use href="#i-hfss"/></svg><b class="sel">HFSSDesign1 (DrivenTerminal)</b></div>
                    <ul>
                      <li><div class="row"><svg><use href="#t-model"/></svg><span>Model</span></div></li>
                      <li><div class="row"><svg><use href="#t-bound"/></svg><span>Boundaries</span></div></li>
                      <li><div class="row"><button class="ex" aria-label="Expand"></button><svg><use href="#t-exc"/></svg><span>Excitations</span></div></li>
                      <li><div class="row"><svg><use href="#t-mesh"/></svg><span>Mesh Operations</span></div></li>
                      <li><div class="row"><button class="ex" aria-label="Expand"></button><svg><use href="#t-mag"/></svg><span>Analysis</span></div></li>
                      <li><div class="row"><svg><use href="#t-opt"/></svg><span>Optimetrics</span></div></li>
                      <li><div class="row"><button class="ex" aria-label="Expand"></button><svg><use href="#t-res"/></svg><span>Results</span></div></li>
                      <li><div class="row"><button class="ex" aria-label="Expand"></button><svg><use href="#t-port"/></svg><span>Port Field Display</span></div></li>
                      <li><div class="row"><button class="ex" aria-label="Expand"></button><svg><use href="#t-field"/></svg><span>Field Overlays</span></div></li>
                      <li><div class="row"><svg><use href="#t-rad"/></svg><span>Radiation</span></div></li>
                    </ul>
                  </li>
                  <li><div class="row"><button class="ex" aria-label="Expand"></button><svg><use href="#t-folder"/></svg><span>Definitions</span></div></li>
                </ul>
              </li>
            </ul>
            <div class="hscroll"><button aria-label="Scroll left"><svg viewBox="0 0 8 10"><path d="M6.500 0l-5 5 5 5" fill="none" stroke="#606060" stroke-width="2"/></svg></button><div class="track"><div class="thumb long"></div></div><button aria-label="Scroll right"><svg viewBox="0 0 8 10"><path d="M1.500 0l5 5-5 5" fill="none" stroke="#606060" stroke-width="2"/></svg></button></div>
          </div>
        </div>
        <button class="tab">Project</button>
      </section>
      <section class="pane props">
        <div class="caption"><h2>Properties</h2><button class="up" aria-label="Expand"></button><button class="x" aria-label="Close"></button></div>
        <div class="raised"></div>
      </section>
    </aside>

    <section class="modeltree">
      <ul class="tree small">
        <li><div class="row"><button class="ex minus" aria-label="Collapse"></button><svg><use href="#t-solid"/></svg><span>Solids</span></div>
          <ul>
            <li><div class="row"><button class="ex minus" aria-label="Collapse"></button><svg><use href="#t-mat"/></svg><span>copper</span></div>
              <ul>
                <li><div class="row"><button class="ex" aria-label="Expand"></button><svg><use href="#t-solid"/></svg><span>trace1</span></div></li>
                <li><div class="row"><button class="ex" aria-label="Expand"></button><svg><use href="#t-solid"/></svg><span>trace2</span></div></li>
              </ul></li>
            <li><div class="row"><button class="ex minus" aria-label="Collapse"></button><svg><use href="#t-mat"/></svg><span>FR4_epoxy</span></div>
              <ul>
                <li><div class="row"><button class="ex" aria-label="Expand"></button><svg><use href="#t-solid"/></svg><span>Box1</span></div></li>
              </ul></li>
          </ul></li>
        <li><div class="row"><button class="ex minus" aria-label="Collapse"></button><svg><use href="#t-sheet"/></svg><span>Sheets</span></div>
          <ul>
            <li><div class="row"><button class="ex minus" aria-label="Collapse"></button><svg><use href="#t-sheet"/></svg><span>Wave Port</span></div>
              <ul>
                <li><div class="row"><button class="ex" aria-label="Expand"></button><svg><use href="#t-sheet"/></svg><span>port1</span></div></li>
                <li><div class="row"><button class="ex" aria-label="Expand"></button><svg><use href="#t-sheet"/></svg><span>port2</span></div></li>
              </ul></li>
          </ul></li>
        <li><div class="row"><button class="ex" aria-label="Expand"></button><svg><use href="#t-cs"/></svg><span>Coordinate Systems</span></div></li>
        <li><div class="row"><button class="ex" aria-label="Expand"></button><svg><use href="#t-planes"/></svg><span>Planes</span></div></li>
        <li><div class="row"><button class="ex" aria-label="Expand"></button><svg><use href="#t-lists"/></svg><span>Lists</span></div></li>
      </ul>
      <div class="hscroll"><button aria-label="Scroll left"><svg viewBox="0 0 8 10"><path d="M6.500 0l-5 5 5 5" fill="none" stroke="#606060" stroke-width="2"/></svg></button><div class="track"><div class="thumb short"></div></div><button aria-label="Scroll right"><svg viewBox="0 0 8 10"><path d="M1.500 0l5 5-5 5" fill="none" stroke="#606060" stroke-width="2"/></svg></button></div>
    </section>

    <section class="viewport">
      <svg class="scene" viewBox="374 146 1544 759" preserveAspectRatio="xMidYMid meet">
        <g fill="none">
          <use href="#gv"/><use href="#gv" x="152.500" y="11.740"/><use href="#gv" x="305" y="23.480"/><use href="#gv" x="457.500" y="35.220"/><use href="#gv" x="610" y="46.960"/><use href="#gv" x="762.500" y="58.700"/><use href="#gv" x="915" y="70.440"/><use href="#gv" x="1067.500" y="82.180"/><use href="#gv" x="1220" y="93.920"/><use href="#gv" x="1372.500" y="105.660"/>
          <use href="#gh"/><use href="#gh" y="104"/><use href="#gh" y="208"/><use href="#gh" y="312"/><use href="#gh" y="416"/><use href="#gh" y="520"/><use href="#gh" y="624"/><use href="#gh" y="728"/>
          <path d="M403 874.500l1494 115M403 895.300l1494 115" stroke="#e4e4e4" stroke-width="1"/>
        </g>
        <!-- dielectric box -->
        <path d="M955.500 450.500L1565.500 498L1558.500 556L956 510L947.500 508z" fill="#b00cb6"/>
        <path d="M947.500 508L956 510L956.500 658.500L948.500 717z" fill="#8e008e"/>
        <path d="M1565.500 498L1567 706L1558 764L1558.500 556z" fill="#8c008c"/>
        <path d="M956 510L1558.500 556V705L956.500 658.500z" fill="#f200f2"/>
        <path d="M956.500 658.500L1558.500 705L1566 706L1558 764L948.500 717z" fill="#b200b2"/>
        <path d="M956.500 658.500L1558.500 705M956.500 658.500L948.500 717L1558 764" fill="none" stroke="#700078"/>
        <path d="M948 508L955.500 450.500L1565.500 498" fill="none" stroke="#5a2070"/>
        <!-- traces and port outlines -->
        <g fill="none">
          <path d="M1210.500 530v-30.500l19 1.500v30.500M1284 536v-30.500l19 1.500v31M1303 507l257 20l-2 28" stroke="#d800dc" stroke-width="1.500"/>
          <path d="M1210.500 531v147M1229.500 532v147M1284 536v147M1303 538v147" stroke="#dc00e4"/>
          <path d="M1257 525v154" stroke="#b000b8"/>
          <path d="M1211 707.500l19 1.500M1284.500 713l19 1.500" stroke="#602078" stroke-width="2" stroke-dasharray="2 1"/>
          <path d="M1569 513V706" stroke="#c24a92" stroke-width="2"/>
          <path d="M1561 739v22" stroke="#e8408c" stroke-width="3"/>
          <path d="M993 466l-7.500 46M993 519V466L1566 510M985 661v56M1566 512v14l-6 40v181" stroke="#82c0da" stroke-width="3"/>
          <path d="M985.500 512v149M993 519v142M985 521l574 44.500" stroke="#d0c49c" stroke-width="3"/>
        </g>
        <!-- axes -->
        <path d="M1257 503l1.500-16" stroke="#a00010" stroke-width="2"/><path d="M1258.500 487l2-13" stroke="#f000c0" stroke-width="2"/>
        <path d="M1260.500 475L1301.500 193" stroke="#f00" stroke-width="1.500"/>
        <path d="M1304.500 168L1293.500 189q2 5 8 6t9-5z" fill="#d00000"/>
        <path d="M1567 527L1886 552" stroke="#00f" stroke-width="1.500"/>
        <path d="M1885.500 543L1913 553.500L1885.500 561z" fill="#0000e8"/>
        <path d="M1257 504l22 1.500" stroke="#00b" stroke-width="1.500"/><path d="M1277 503l8 2.500-8 2z" fill="#00a"/>
        <path d="M1256.500 504v16" stroke="#060" stroke-width="1.500"/><path d="M1253.500 518h6l-3 6z" fill="#060"/>
        <path d="M1257.500 711V858" stroke="#188018" stroke-width="2"/>
        <path d="M1257.500 857q8 1 9 7l-5 13h-8l-5-13q2-6 9-7z" fill="#007c00"/>
        <path d="M1257 486.500h4" stroke="#eecc40" stroke-width="3"/>
        <text x="1305" y="167" class="axis" fill="#f00">Z</text>
        <text x="1911" y="554" class="axis" fill="#00e">Y</text>
        <!-- scale ruler -->
        <path d="M834.500 877.500h312v11h-312z" fill="#fff" stroke="#666"/><path d="M1146 877h311v12h-311z" fill="#000"/>
        <text x="831" y="901" class="scale">0</text><text x="1135" y="901" class="scale">100</text><text x="1446" y="901" class="scale">200 (mil)</text>
      </svg>
    </section>
  </main>

  <footer class="bottom">
    <section class="msg">
      <div class="vcap"><button class="x" aria-label="Close"></button><button class="left" aria-label="Expand"></button><h2>Message Manager</h2></div>
      <div class="list"></div>
    </section>
    <section class="progress">
      <div class="vcap"><button class="x" aria-label="Close"></button><button class="left" aria-label="Expand"></button><h2>Progress</h2></div>
      <div class="well"></div>
    </section>
  </footer>
  <div class="status"><span class="hint">Nothing is selected</span><span class="cell"></span><span class="cell num">NUM</span><span class="cell last"></span></div>
</div>

<div class="meter">
  <div class="rates">
    <div><svg viewBox="0 0 10 9"><path d="M5 9V1M1 5l4-4 4 4" fill="none" stroke="#3cc25c" stroke-width="1.400"/></svg><span>1.0</span><span>M/s</span></div>
    <div><svg viewBox="0 0 10 9"><path d="M5 0v8M1 4l4 4 4-4" fill="none" stroke="#f0935a" stroke-width="1.400"/></svg><span>8.6</span><span>M/s</span></div>
  </div>
  <div class="dial"><svg viewBox="0 0 68 68"><path d="M6 43a29.500 29.500 0 0 0 28 20" fill="none" stroke="#25b864" stroke-width="2.500" stroke-linecap="round"/></svg><strong>20</strong><small>%</small></div>
</div>
</body>
</html>
```
FILE: styles.css
```css
* { box-sizing: border-box; }
body {
  margin: 0;
  background: #f0f0f0;
  color: #000;
  font: 16px/24px "Open Sans", "Noto Sans", sans-serif;
}
button {
  padding: 0;
  border: 0;
  background: none;
  color: inherit;
  font: inherit;
  display: flex;
  align-items: center;
  justify-content: center;
}
h1, h2, ul { margin: 0; padding: 0; font-weight: 400; font-size: inherit; list-style: none; }
.sprite { position: absolute; width: 0; height: 0; }
.app { display: flex; flex-direction: column; min-height: 100vh; }

/* title and menu */
.titlebar { display: flex; align-items: center; height: 28px; padding-left: 2px; background: #fff; }
.logo { width: 20px; height: 20px; margin-right: 5px; }
.title { flex: 1; white-space: nowrap; }
.winbtns { display: flex; padding-right: 3px; }
.winbtns button { width: 58px; height: 28px; }
.winbtns svg { width: 12px; height: 12px; }
.menubar { display: flex; align-items: center; height: 25px; padding-left: 7px; background: #fff; }
.docicon { width: 19px; height: 16px; }
.menubar > button { padding: 0 7px; white-space: pre; }
.menubar u { text-underline-offset: 2px; }
.mdibtns { display: flex; gap: 2px; margin-left: auto; padding-right: 2px; }
.mdibtns button { width: 22px; height: 22px; border: 1px solid #e2e2e2; }
.mdibtns svg { width: 9px; height: 9px; }

/* toolbars */
.toolbars { padding-bottom: 1px; }
.tbrow { display: flex; gap: 11px; height: 30px; padding-left: 3px; }
.tb { display: flex; align-items: center; }
.tb::before {
  content: "";
  width: 3px;
  height: 19px;
  margin-right: 3px;
  background: repeating-linear-gradient(#000 0 1px, transparent 1px 2px);
}
.tb button { width: 23px; height: 23px; }
.tb button.on { border: 1px solid #0078d7; background: #e0eef9; }
.tb svg { width: 16px; height: 16px; }
.tb i { width: 1px; height: 21px; margin: 0 4px 0 3px; background: #b4b4b4; }
.combo {
  position: relative;
  height: 22px;
  margin-right: 1px;
  border: 2px solid;
  border-color: #808080 #e4e4e4 #e4e4e4 #808080;
  background: #fff;
}
.combo.wide { width: 99px; }
.combo.mid { width: 79px; }
.combo.narrow { width: 49px; }
.combo select {
  display: block;
  width: 100%;
  height: 18px;
  padding: 0 2px;
  border: 0;
  background: none;
  appearance: none;
  font: 14px/18px "Liberation Mono", monospace;
}
.combo::before, .combo::after { content: ""; position: absolute; pointer-events: none; }
.combo::before { right: 0; top: 0; width: 19px; height: 18px; background: #f0f0f0; border: 1px solid; border-color: #e4e4e4 #707070 #707070 #e4e4e4; }
.combo::after { right: 5px; top: 7px; border: 5px solid transparent; border-top-color: #000; border-bottom: 0; }

/* work area */
.work { flex: 1; display: flex; min-height: 0; }
.dock { display: flex; flex-direction: column; width: 262px; border-right: 1px solid #fff; margin-right: 3px; }
.pane { display: flex; flex-direction: column; align-items: flex-start; padding: 0 10px 0 3px; }
.project { flex: 422 1 0; }
.props { flex: 323 1 0; border-top: 2px solid #6e6e6e; padding-top: 2px; padding-bottom: 11px; }
.caption { display: flex; align-items: center; align-self: stretch; width: 254px; height: 15px; padding: 0 5px 0 2px; border: 1px solid #a0a0a0; }
.caption h2 { flex: 1; font: 11px/12px "Liberation Sans", sans-serif; }
.up, .left, .x { width: 7px; height: 7px; flex: none; }
.up::before { content: ""; border: 3px solid transparent; border-bottom-color: #000; border-top: 0; }
.left::before { content: ""; border: 3px solid transparent; border-right: 4px solid #000; border-left: 0; }
.x { background: linear-gradient(45deg, transparent 42%, #000 42% 58%, transparent 58%), linear-gradient(-45deg, transparent 42%, #000 42% 58%, transparent 58%); }
.caption .x { margin-left: 6px; }
.raised { flex: 1; width: 244px; margin: 4px 0 0 5px; padding: 2px 3px 1px; border: 2px solid; border-color: #fff #707070 #707070 #fff; display: flex; flex-direction: column; min-height: 0; }
.sunken { flex: 1; display: flex; flex-direction: column; border: 2px solid; border-color: #707070 #e8e8e8 #e8e8e8 #707070; background: #fff; overflow: hidden; min-height: 0; }
.tab { width: 68px; height: 18px; margin: 0 0 14px 6px; border: solid #808080; border-width: 0 2px 2px 0; line-height: 18px; }

/* trees */
.tree { flex: 1; overflow: hidden; min-height: 0; }
.tree li { position: relative; }
.tree ul { padding-left: 22px; }
.tree li::before { content: ""; position: absolute; left: 4px; top: 0; bottom: 0; border-left: 1px dotted #808080; }
.tree li:last-child::before { bottom: auto; height: 12px; }
.tree > li:first-child::before { top: 12px; }
.tree > .root::before { display: none; }
.row { position: relative; display: flex; align-items: center; height: 24px; padding-left: 18px; white-space: nowrap; }
.row::before { content: ""; position: absolute; left: 4px; top: 12px; width: 12px; border-top: 1px dotted #808080; }
.row svg { flex: none; width: 16px; height: 16px; margin-right: 3px; }
.row span, .row b { padding: 0 2px; }
.row b { font-weight: 700; font-size: 15px; }
.row .sel { background: #f0f0f0; padding-right: 60px; }
.ex { position: absolute; left: 0; top: 8px; width: 9px; height: 9px; border: 1px solid #707070; background: linear-gradient(#000 0 0) center / 5px 1px no-repeat, linear-gradient(#000 0 0) center / 1px 5px no-repeat, #fff; }
.ex.minus { background: linear-gradient(#000 0 0) center / 5px 1px no-repeat, #fff; }
.big { padding-left: 3px; }
.small { padding-left: 4px; }
.small .row { height: 22px; }
.small .row::before { top: 11px; }
.small .ex { top: 7px; }
.small li:last-child::before { height: 11px; }

.hscroll { display: flex; height: 19px; background: #f0f0f0; }
.hscroll button { width: 21px; }
.hscroll svg { width: 8px; height: 10px; }
.track { flex: 1; }
.thumb { height: 19px; background: #cdcdcd; }
.thumb.long { width: 78%; }
.thumb.short { width: 52%; }

.modeltree { display: flex; flex-direction: column; width: 104px; margin-right: 3px; border: 2px solid; border-color: #808080 #e8e8e8 #f8f8f8 #707070; background: #fff; }
.viewport { flex: 1; min-width: 0; border: 2px solid; border-color: #808080 #e8e8e8 #f8f8f8 #707070; border-bottom-width: 1px; background: #fff; }
.scene { display: block; width: 100%; height: 100%; }
.axis { font: bold 12px "Liberation Sans", sans-serif; }
.scale { font: bold 12px "Liberation Sans", sans-serif; fill: #333; }

/* bottom panes */
.bottom { display: flex; height: 108px; margin-top: 4px; border-top: 2px solid #707070; border-bottom: 1px solid #a0a0a0; }
.msg, .progress { flex: 1 1 0; display: flex; gap: 2px; padding: 2px 7px 3px 3px; }
.progress { border-left: 2px solid #707070; padding-right: 4px; padding-left: 2px; }
.vcap { display: flex; flex-direction: column; align-items: center; gap: 5px; width: 14px; padding-top: 4px; border: 1px solid #a0a0a0; }
.vcap h2 { flex: 1; min-height: 0; overflow: hidden; writing-mode: vertical-rl; transform: rotate(180deg); font: 11px/12px "Liberation Sans", sans-serif; white-space: nowrap; padding-top: 2px; align-self: stretch; }
.list { flex: 1; margin: 1px 0 2px; border: 1px solid #82868f; background: #fff; }
.well { flex: 1; margin: 1px 0 1px; border: 2px solid; border-color: #707070 #e4e4e4 #e4e4e4 #707070; background: #fff; }

.status { display: flex; gap: 3px; height: 24px; padding-left: 2px; }
.hint { flex: 1; line-height: 29px; height: 24px; }
.cell { width: 35px; height: 20px; margin-top: 4px; border: 1px solid; border-color: #a0a0a0 #fff #fff #a0a0a0; line-height: 20px; text-align: center; }
.num { width: 43px; }
.cell.last { width: 43px; }

/* floating network meter */
.meter { position: fixed; right: 24px; bottom: 23px; display: flex; align-items: center; }
.rates { width: 89px; height: 50px; margin-right: -20px; padding: 7px 0 0 15px; border-radius: 25px 0 0 25px; background: #fff; box-shadow: 0 1px 6px rgba(0, 0, 0, .25); color: #666; font-size: 11px; line-height: 18px; }
.rates div { display: flex; align-items: center; }
.rates svg { width: 10px; height: 9px; margin-right: 3px; }
.rates span { width: 20px; }
.dial { position: relative; display: flex; align-items: baseline; justify-content: center; width: 67px; height: 67px; padding-top: 12px; border-radius: 50%; background: #fff; box-shadow: 0 1px 8px rgba(0, 0, 0, .25); }
.dial svg { position: absolute; inset: 0; }
.dial strong { font-weight: 400; font-size: 28px; line-height: 42px; }
.dial small { font-size: 11px; }
```
